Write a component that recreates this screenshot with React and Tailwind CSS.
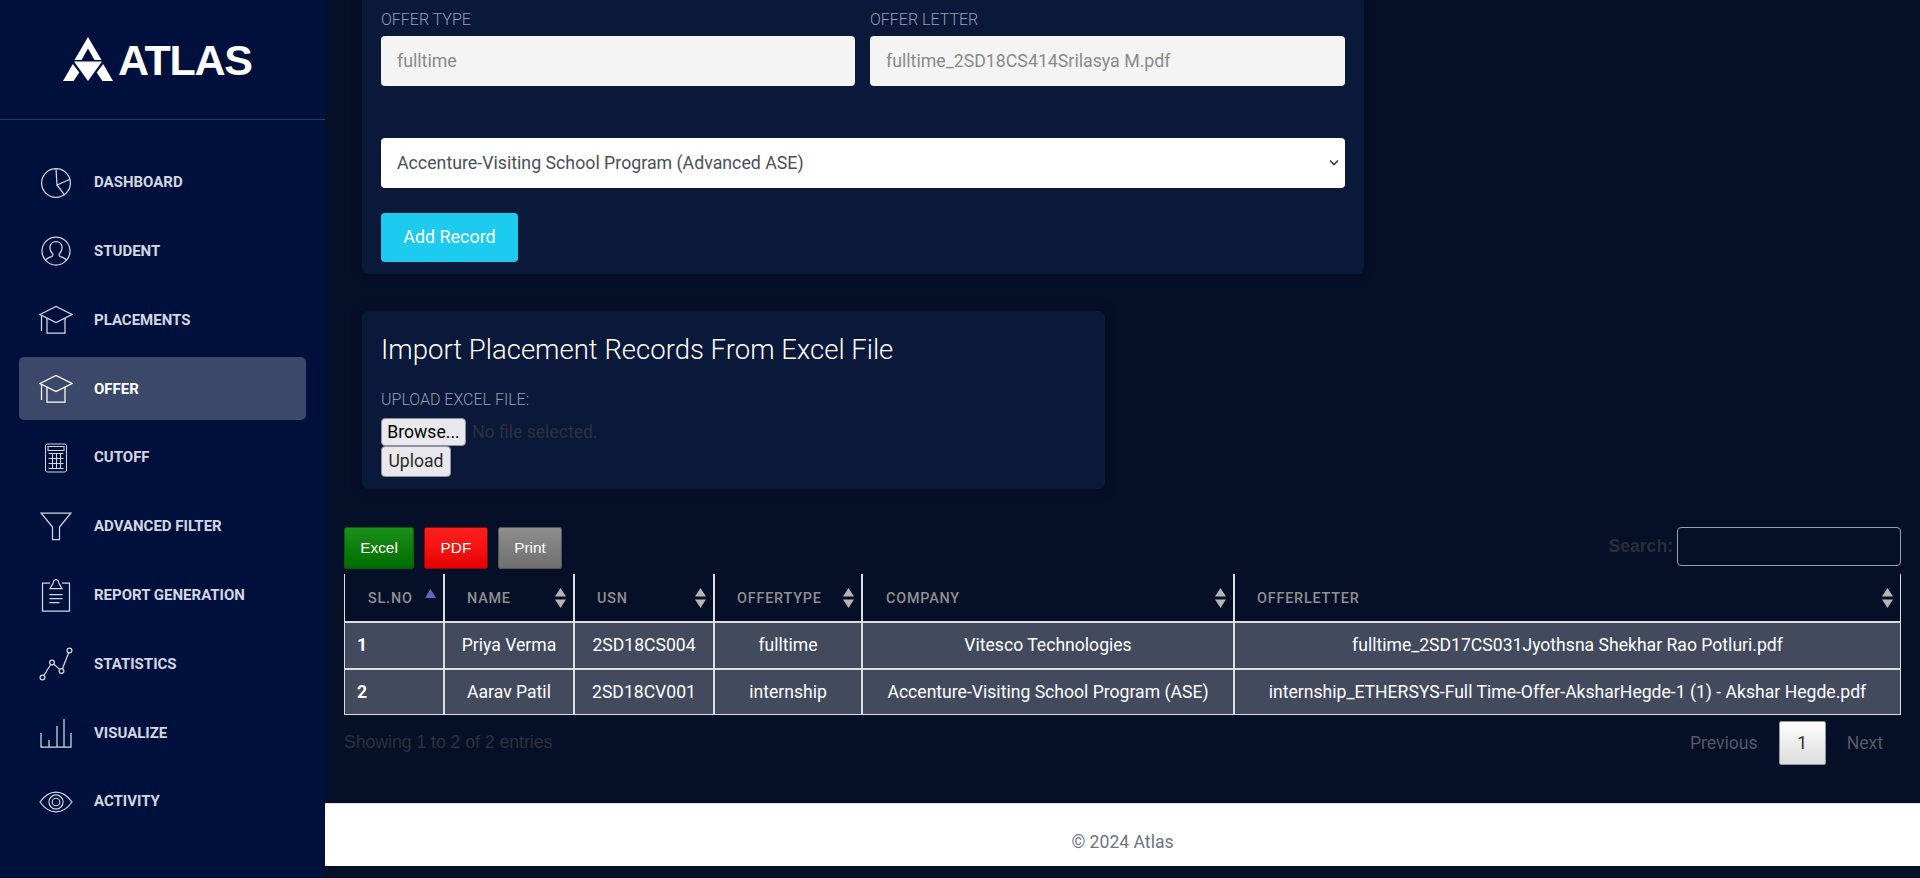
const Cap = () => (
  <svg width="34" height="30" viewBox="0 0 34 30" fill="none" stroke="currentColor" strokeWidth="1.25">
    <path d="M1 9.5 17 1.5 33 9.5 17 17.5Z" />
    <path d="M8 13v15h18V13" />
    <path d="M2.5 10.5V26" />
  </svg>
);

const icons = {
  dashboard: (
    <svg width="32" height="32" viewBox="0 0 32 32" fill="none" stroke="currentColor" strokeWidth="1.25">
      <circle cx="16" cy="16" r="14.4" />
      <path d="M16 1.6 17 18 30 12.2M17 18 24.5 27.8" />
    </svg>
  ),
  student: (
    <svg width="32" height="32" viewBox="0 0 32 32" fill="none" stroke="currentColor" strokeWidth="1.25">
      <circle cx="16" cy="16" r="14" />
      <path d="M5.5 25.5c1-2.2 3.2-2.8 6-3.8 1.5-.6 1.6-1.8.8-3-1.5-2-2.4-3.8-2.4-6.2 0-3.6 2.6-6 6.1-6s6.1 2.4 6.1 6c0 2.4-.9 4.2-2.4 6.2-.8 1.2-.7 2.4.8 3 2.8 1 5 1.6 6 3.8" />
    </svg>
  ),
  cap: <Cap />,
  calc: (
    <svg width="24" height="30" viewBox="0 0 24 30" fill="none" stroke="currentColor" strokeWidth="1">
      <rect x="1.5" y="1" width="21" height="28" rx="2" />
      <rect x="4" y="3.5" width="16" height="4" />
      <path d="M4.5 10.5h15M4.5 15.5h15M4.5 20.5h15M4.5 25.5h15M8.5 10v16M12.5 10v16M16.5 10v16" />
    </svg>
  ),
  filter: (
    <svg width="32" height="30" viewBox="0 0 32 30" fill="none" stroke="currentColor" strokeWidth="1.25">
      <path d="M1 2h30L19.5 16v12.5h-7V16Z" />
    </svg>
  ),
  report: (
    <svg width="30" height="34" viewBox="0 0 30 34" fill="none" stroke="currentColor" strokeWidth="1.25">
      <path d="M9 5H1.5v28h27V5H21" />
      <path d="M9 10.5h12L18 5.5c0-2-1.2-4-3-4s-3 2-3 4Z" />
      <path d="M8.500 16.500h13M8.500 20.500h13M8.500 24.500h10" />
    </svg>
  ),
  stats: (
    <svg width="34" height="34" viewBox="0 0 34 34" fill="none" stroke="currentColor" strokeWidth="1.25">
      <circle cx="3.500" cy="30.500" r="2.400" />
      <circle cx="13" cy="15.500" r="2.400" />
      <circle cx="22.500" cy="24" r="2.400" />
      <circle cx="30.500" cy="3.500" r="2.400" />
      <path d="M4.800 28.500 11.700 17.500M14.800 17.200 20.700 22.400M23.400 21.800 29.700 5.800" />
    </svg>
  ),
  bars: (
    <svg width="32" height="30" viewBox="0 0 32 30" fill="none" stroke="currentColor" strokeWidth="1.25">
      <path d="M1 15v14h30V15M9 22v7M17 8v21M24 1v28" />
    </svg>
  ),
  eye: (
    <svg width="36" height="24" viewBox="0 0 36 24" fill="none" stroke="currentColor" strokeWidth="1.25">
      <path d="M1 12C6 5 12 1.500 18 1.500S30 5 35 12c-5 7-11 10.500-17 10.500S6 19 1 12Z" />
      <circle cx="18" cy="12" r="7.500" />
      <circle cx="18" cy="12" r="4" />
    </svg>
  ),
};

const navItems = [
  ["DASHBOARD", "dashboard"],
  ["STUDENT", "student"],
  ["PLACEMENTS", "cap"],
  ["OFFER", "cap", true],
  ["CUTOFF", "calc"],
  ["ADVANCED FILTER", "filter"],
  ["REPORT GENERATION", "report"],
  ["STATISTICS", "stats"],
  ["VISUALIZE", "bars"],
  ["ACTIVITY", "eye"],
];

const Logo = () => (
  <svg width="50" height="44" viewBox="0 0 50 44" fill="#ffffff">
    <path d="M25 0 38.500 23H31.500L25 11.500 18.500 23H11.500Z" />
    <path d="M11 24.500H39L25 44Z" />
    <path d="M9.800 27 0 44H10.500L16.300 35.500Z" />
    <path d="M40.200 27 50 44H39.500L33.700 35.500Z" />
  </svg>
);

const Sort = ({ asc }) =>
  asc ? (
    <svg className="absolute right-[7px] top-[15px]" width="11" height="9" viewBox="0 0 11 9">
      <path d="M5.500 0 11 9H0Z" fill="#6366c4" />
    </svg>
  ) : (
    <svg className="absolute right-[7px] top-[14px]" width="11" height="20" viewBox="0 0 11 20">
      <path d="M5.500 0 11 8.500H0Z" fill="#b5b5b5" />
      <path d="M5.500 20 11 11.500H0Z" fill="#b5b5b5" />
    </svg>
  );

const cols = [
  { label: "SL.NO", w: "w-[100px]", pl: "pl-[23px]", asc: true },
  { label: "NAME", w: "w-[130px]", pl: "pl-[22px]" },
  { label: "USN", w: "w-[140px]", pl: "pl-[22px]" },
  { label: "OFFERTYPE", w: "w-[148px]", pl: "pl-[22px]" },
  { label: "COMPANY", w: "w-[372px]", pl: "pl-[23px]" },
  { label: "OFFERLETTER", w: "w-[667px]", pl: "pl-[22px]" },
];

const rows = [
  ["1", "Priya Verma", "2SD18CS004", "fulltime", "Vitesco Technologies", "fulltime_2SD17CS031Jyothsna Shekhar Rao Potluri.pdf"],
  ["2", "Aarav Patil", "2SD18CV001", "internship", "Accenture-Visiting School Program (ASE)", "internship_ETHERSYS-Full Time-Offer-AksharHegde-1 (1) - Akshar Hegde.pdf"],
];

export default function App() {
  return (
    <div className="flex h-[878px] w-[1920px] overflow-hidden bg-[#060f28] font-['Roboto',sans-serif]">
      <aside className="w-[325px] shrink-0 bg-[#00103d]">
        <div className="flex h-[120px] items-start justify-start border-b border-[#2c3a66] pl-[63px] pt-[37px]">
          <Logo />
          <span className="ml-[5px] mt-[-2px] font-['Liberation_Sans',sans-serif] text-[43px] font-bold leading-[50px] tracking-[-1.3px] text-white">ATLAS</span>
        </div>
        <nav className="mt-[31px] flex flex-col gap-[5.8px] pl-[19px]">
          {navItems.map(([label, icon, active]) => (
            <div
              key={label}
              className={`flex h-[63px] w-[287px] items-center rounded-[5px] ${active ? "bg-[#3b4869] text-white" : "text-[#d3d7e2]"}`}
            >
              <span className="flex w-[75px] justify-start pl-[20px]">
                <span className="flex w-[34px] justify-center">{icons[icon]}</span>
              </span>
              <span className="text-[15px] font-bold">{label}</span>
            </div>
          ))}
        </nav>
      </aside>

      <main className="flex min-w-0 flex-1 flex-col">
        <section className="ml-[37px] h-[274px] w-[1002px] shrink-0 rounded-b-[6px] bg-[#0a1839] px-[19px] pt-[12px] shadow-[0_0_12px_rgba(0,0,0,0.25)]">
          <div className="flex gap-[15px]">
            <div className="w-[474px]">
              <div className="text-[16px] font-light leading-[16px] text-[#989eae]">OFFER TYPE</div>
              <div className="mt-[8px] flex h-[50px] items-center rounded-[4px] bg-[#f4f4f4] pl-[16px] text-[17.750px] text-[#8a8a8a]">fulltime</div>
            </div>
            <div className="w-[475px]">
              <div className="text-[16px] font-light leading-[16px] text-[#989eae]">OFFER LETTER</div>
              <div className="mt-[8px] flex h-[50px] items-center rounded-[4px] bg-[#f4f4f4] pl-[16px] text-[17.750px] text-[#8a8a8a]">fulltime_2SD18CS414Srilasya M.pdf</div>
            </div>
          </div>
          <div className="relative mt-[52px] flex h-[50px] items-center rounded-[4px] bg-white pl-[16px] text-[17.750px] text-[#495057]">
            Accenture-Visiting School Program (Advanced ASE)
            <svg className="absolute right-[5px] top-[21px]" width="12" height="8" viewBox="0 0 12 8" fill="none" stroke="#3a3a3a" strokeWidth="1.6">
              <path d="M2 1.500 6 5.500 10 1.500" />
            </svg>
          </div>
          <button className="mt-[25px] flex h-[49px] w-[137px] items-center justify-center rounded-[4px] bg-[#1ccbee] text-[17.900px] text-white">Add Record</button>
        </section>

        <section className="ml-[37px] mt-[37px] h-[178px] w-[743px] shrink-0 rounded-[6px] bg-[#0a1839] px-[19px] pt-[21px] shadow-[0_0_12px_rgba(0,0,0,0.25)]">
          <h2 className="text-[27.500px] font-light leading-[36px] text-white">Import Placement Records From Excel File</h2>
          <div className="mt-[23px] text-[16px] font-light leading-[18px] text-[#989eae]">UPLOAD EXCEL FILE:</div>
          <div className="mt-[9px] flex h-[28px] items-center">
            <button className="flex h-[28px] w-[85px] items-center justify-center rounded-[4px] border border-[#8f8f9d] bg-[#e9e9ed] text-[17.6px] text-black">Browse...</button>
            <span className="ml-[6px] text-[17.6px] text-[#2e3138]">No file selected.</span>
          </div>
          <button className="flex h-[31px] w-[70px] items-center justify-center rounded-[4px] border border-[#8f8f9d] bg-[#e9e9ed] text-[17.6px] text-[#2b2b2b]">Upload</button>
        </section>

        <section className="mx-[19px] mt-[38px] shrink-0">
          <div className="flex items-start justify-between">
            <div className="flex gap-[10px]">
              <button className="flex h-[42px] w-[70px] items-center justify-center rounded-[2px] border border-[#0a5c0a] bg-gradient-to-b from-[#1a8f1a] to-[#006c00] font-['Liberation_Sans',sans-serif] text-[15.4px] text-white">Excel</button>
              <button className="flex h-[42px] w-[64px] items-center justify-center rounded-[2px] border border-[#8a0a0a] bg-gradient-to-b from-[#ff1f1f] to-[#e60000] font-['Liberation_Sans',sans-serif] text-[15.4px] text-white">PDF</button>
              <button className="flex h-[42px] w-[64px] items-center justify-center rounded-[2px] border border-[#555555] bg-gradient-to-b from-[#8e8e8e] to-[#6f6f6f] font-['Liberation_Sans',sans-serif] text-[15.4px] text-white">Print</button>
            </div>
            <div className="flex items-center">
              <span className="mr-[4px] font-['Liberation_Sans',sans-serif] text-[17.6px] font-bold text-[#2b2e35]">Search:</span>
              <div className="h-[39px] w-[224px] rounded-[4px] border border-[#9a9ea8]" />
            </div>
          </div>
          <table className="mt-[5px] w-[1557px] table-fixed border-separate border-spacing-0">
            <thead>
              <tr>
                {cols.map((c) => (
                  <th
                    key={c.label}
                    className={`relative h-[48px] ${c.w} ${c.pl} border-x border-b border-[#dddddd] pt-[2px] text-left text-[14.4px] font-medium tracking-[0.8px] text-[#8f8f8f]`}
                  >
                    {c.label}
                    <Sort asc={c.asc} />
                  </th>
                ))}
              </tr>
            </thead>
            <tbody>
              {rows.map((r) => (
                <tr key={r[0]}>
                  {r.map((cell, i) => (
                    <td
                      key={i}
                      className={`h-[46.500px] border border-[#dddddd] bg-[#434a5e] text-[17.6px] text-white ${i === 0 ? "pl-[12px] text-left font-bold" : "text-center"}`}
                    >
                      {cell}
                    </td>
                  ))}
                </tr>
              ))}
            </tbody>
          </table>
          <div className="flex items-start justify-between">
            <div className="mt-[17px] font-['Liberation_Sans',sans-serif] text-[17.6px] leading-[20px] text-[#2e3138]">Showing 1 to 2 of 2 entries</div>
            <div className="mt-[6px] flex items-center pr-[18px] text-[17.6px] text-[#555a66]">
              <span>Previous</span>
              <span className="ml-[21px] mr-[21px] flex h-[44px] w-[47px] items-center justify-center rounded-[2px] border border-[#979797] bg-gradient-to-b from-white to-[#dcdcdc] text-[#333333]">1</span>
              <span>Next</span>
            </div>
          </div>
        </section>

        <footer className="mb-[12px] mt-auto flex h-[63px] shrink-0 items-center justify-center border-t border-[#dee2e6] bg-white pt-[14px] text-[17.6px] text-[#6c757d]">
          © 2024 Atlas
        </footer>
      </main>
    </div>
  );
}
